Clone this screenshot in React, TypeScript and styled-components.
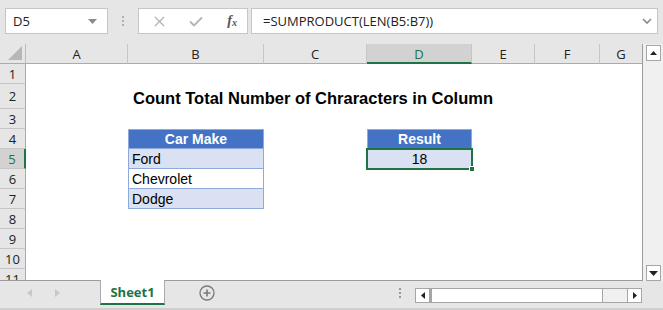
import styled, { createGlobalStyle } from "styled-components";

const GlobalStyle = createGlobalStyle`
  html, body { margin: 0; padding: 0; background: #fff; }
  * { box-sizing: border-box; }
`;

const GREEN = "#217346";
const UI_FONT = `"Open Sans", "Noto Sans", "DejaVu Sans", sans-serif`;
const CELL_FONT = `"Liberation Sans", Arial, sans-serif`;

const COLS = ["A", "B", "C", "D", "E", "F", "G"];
const COL_WIDTHS = [26, 102, 136, 103, 105, 63, 65, 43];
const ROW_HEIGHTS = [20, 20, 25, 20, 20, 20, 20, 20, 20, 20, 20, 20];

type CellKind = "title" | "head" | "band" | "plain" | "result";
type CellData = { text: string; kind: CellKind; align?: "left" | "center" };

// 表のデータ（行番号 → 列番号 → セル）
const cells: Record<number, Record<number, CellData>> = {
  2: { 1: { text: "Count Total Number of Chraracters in Column", kind: "title" } },
  4: {
    1: { text: "Car Make", kind: "head", align: "center" },
    3: { text: "Result", kind: "head", align: "center" },
  },
  5: {
    1: { text: "Ford", kind: "band" },
    3: { text: "18", kind: "result", align: "center" },
  },
  6: { 1: { text: "Chevrolet", kind: "plain" } },
  7: { 1: { text: "Dodge", kind: "band" } },
};

const ArrowDown = ({ color = "#777" }: { color?: string }) => (
  <svg width="9" height="5" viewBox="0 0 9 5">
    <path d="M0 0h9L4.5 5z" fill={color} />
  </svg>
);

export default function App() {
  return (
    <Window>
      <GlobalStyle />
      <FormulaBar>
        <NameBox>
          <span>D5</span>
          <ArrowDown color="#8a8a8a" />
        </NameBox>
        <Grip>
          <i />
          <i />
          <i />
        </Grip>
        <IconBox>
          <svg width="11" height="11" viewBox="0 0 11 11">
            <path d="M1 1l9 9M10 1l-9 9" stroke="#b4b4b4" strokeWidth="1.4" />
          </svg>
          <svg width="14" height="11" viewBox="0 0 14 11">
            <path d="M1 5.5l4 4L13 1.5" stroke="#b4b4b4" strokeWidth="1.8" fill="none" />
          </svg>
          <Fx>
            f<sub>x</sub>
          </Fx>
        </IconBox>
        <FormulaInput>
          <span>=SUMPRODUCT(LEN(B5:B7))</span>
          <svg width="10" height="7" viewBox="0 0 10 7">
            <path d="M1 1l4 4 4-4" stroke="#8a8a8a" strokeWidth="1.6" fill="none" />
          </svg>
        </FormulaInput>
      </FormulaBar>

      <SheetArea>
        <Sheet>
          <Corner>
            <svg width="14" height="14" viewBox="0 0 14 14">
              <path d="M14 0V14H0z" fill="#b7b7b7" />
            </svg>
          </Corner>
          {COLS.map((c) => (
            <ColHeader key={c} $active={c === "D"}>
              {c}
            </ColHeader>
          ))}
          {ROW_HEIGHTS.slice(1).map((_, i) => {
            const row = i + 1;
            return [
              <RowHeader key={`h${row}`} $active={row === 5}>
                {row}
              </RowHeader>,
              ...COLS.map((_, col) => {
                const d = cells[row]?.[col];
                return (
                  <Cell
                    key={`${row}-${col}`}
                    $kind={d?.kind}
                    $align={d?.align ?? "left"}
                    $topEdge={row === 4}
                  >
                    {d?.text}
                    {d?.kind === "result" && <FillHandle />}
                  </Cell>
                );
              }),
            ];
          })}
        </Sheet>
        <VScroll>
          <ScrollBtn>
            <svg width="7" height="4" viewBox="0 0 7 4">
              <path d="M0 4h7L3.5 0z" fill="#222" />
            </svg>
          </ScrollBtn>
          <ScrollBtn>
            <ArrowDown color="#222" />
          </ScrollBtn>
        </VScroll>
      </SheetArea>

      <TabBar>
        <TabNav>
          <svg width="5" height="8" viewBox="0 0 5 8">
            <path d="M5 0v8L0 4z" fill="#c8c8c8" />
          </svg>
          <svg width="5" height="8" viewBox="0 0 5 8">
            <path d="M0 0v8l5-4z" fill="#c8c8c8" />
          </svg>
        </TabNav>
        <SheetTab>Sheet1</SheetTab>
        <AddSheet>
          <svg width="16" height="16" viewBox="0 0 16 16">
            <circle cx="8" cy="8" r="7" stroke="#7a7a7a" strokeWidth="1.3" fill="none" />
            <path d="M8 4.5v7M4.5 8h7" stroke="#7a7a7a" strokeWidth="1.6" />
          </svg>
        </AddSheet>
        <Grip $bar>
          <i />
          <i />
          <i />
        </Grip>
        <HScroll>
          <HBtn>
            <svg width="4" height="7" viewBox="0 0 4 7">
              <path d="M4 0v7L0 3.5z" fill="#222" />
            </svg>
          </HBtn>
          <HThumb />
          <HBtn>
            <svg width="4" height="7" viewBox="0 0 4 7">
              <path d="M0 0v7l4-3.5z" fill="#222" />
            </svg>
          </HBtn>
        </HScroll>
      </TabBar>
    </Window>
  );
}

const Window = styled.div`
  width: 663px;
  height: 310px;
  overflow: hidden;
  background: #e6e6e6;
  display: flex;
  flex-direction: column;
`;

const FormulaBar = styled.div`
  height: 44px;
  display: flex;
  align-items: flex-start;
  padding: 8px 5px 0 5px;
  font-family: ${UI_FONT};
  font-size: 13px;
  color: #222;
`;

const NameBox = styled.div`
  width: 103px;
  height: 26px;
  background: #fff;
  border: 1px solid #c6c6c6;
  display: flex;
  align-items: center;
  justify-content: space-between;
  padding: 0 10px 0 7px;
`;

const Grip = styled.div<{ $bar?: boolean }>`
  width: 30px;
  height: ${(p) => (p.$bar ? "auto" : "26px")};
  display: flex;
  flex-direction: column;
  align-items: center;
  justify-content: center;
  gap: 2px;
  i {
    display: block;
    width: 2px;
    height: 2px;
    background: ${(p) => (p.$bar ? "#9a9a9a" : "#b0b0b0")};
  }
`;

const IconBox = styled.div`
  width: 110px;
  height: 26px;
  background: #fff;
  border: 1px solid #c6c6c6;
  display: flex;
  align-items: center;
  justify-content: space-between;
  padding: 0 10px 0 15px;
`;

const Fx = styled.span`
  font-family: "Liberation Serif", serif;
  font-style: italic;
  font-weight: bold;
  font-size: 14px;
  color: #555;
  sub {
    font-size: 10px;
    vertical-align: -1px;
  }
`;

const FormulaInput = styled.div`
  margin-left: 3px;
  flex: 1;
  height: 26px;
  background: #fff;
  border: 1px solid #c6c6c6;
  display: flex;
  align-items: center;
  justify-content: space-between;
  padding: 0 5px 0 11px;
  font-size: 13px;
`;

const SheetArea = styled.div`
  height: 237px;
  display: flex;
`;

const Sheet = styled.div`
  width: 643px;
  display: grid;
  grid-template-columns: ${COL_WIDTHS.map((w) => `${w}px`).join(" ")};
  grid-template-rows: ${ROW_HEIGHTS.map((h) => `${h}px`).join(" ")};
  background: #fff;
  border-right: 1px solid #9b9b9b;
  border-bottom: 1px solid #9b9b9b;
  overflow: hidden;
`;

const Corner = styled.div`
  background: #e6e6e6;
  border-right: 1px solid #bcbcbc;
  border-bottom: 1px solid #ababab;
  display: flex;
  align-items: flex-end;
  justify-content: flex-end;
  padding: 0 3px 3px 0;
`;

const ColHeader = styled.div<{ $active?: boolean }>`
  background: ${(p) => (p.$active ? "#d2d2d2" : "#e6e6e6")};
  border-right: 1px solid #c6c6c6;
  border-bottom: ${(p) => (p.$active ? `2px solid ${GREEN}` : "1px solid #ababab")};
  color: ${(p) => (p.$active ? GREEN : "#222")};
  font-family: ${UI_FONT};
  font-size: 13px;
  display: flex;
  align-items: center;
  justify-content: center;
  padding-top: ${(p) => (p.$active ? "1px" : "0")};
`;

const RowHeader = styled.div<{ $active?: boolean }>`
  background: ${(p) => (p.$active ? "#d2d2d2" : "#e6e6e6")};
  border-right: ${(p) => (p.$active ? `2px solid ${GREEN}` : "1px solid #ababab")};
  border-bottom: 1px solid #c6c6c6;
  color: ${(p) => (p.$active ? GREEN : "#222")};
  font-family: ${UI_FONT};
  font-size: 13px;
  display: flex;
  align-items: center;
  justify-content: center;
`;

const cellFill: Record<CellKind, string> = {
  title: "transparent",
  head: "#4472c4",
  band: "#d9e1f2",
  plain: "#fff",
  result: "#d9e1f2",
};

const Cell = styled.div<{ $kind?: CellKind; $align: "left" | "center"; $topEdge?: boolean }>`
  position: relative;
  font-family: ${CELL_FONT};
  font-size: ${(p) => (p.$kind === "title" ? "16.5px" : "14px")};
  font-weight: ${(p) => (p.$kind === "title" || p.$kind === "head" ? "bold" : "normal")};
  color: ${(p) => (p.$kind === "head" ? "#fff" : "#000")};
  white-space: nowrap;
  overflow: visible;
  display: flex;
  align-items: flex-end;
  justify-content: ${(p) => (p.$align === "center" ? "center" : "flex-start")};
  padding: 0 3px 1px ${(p) => (p.$kind === "title" ? "5px" : "3px")};
  background: ${(p) => (p.$kind ? cellFill[p.$kind] : "transparent")};
  z-index: ${(p) => (p.$kind === "title" ? 1 : 0)};
  ${(p) =>
    p.$kind && p.$kind !== "title"
      ? `border: 1px solid #8ea9db; border-top-width: ${p.$topEdge ? 1 : 0}px;`
      : ""}
  ${(p) =>
    p.$kind === "result"
      ? `outline: 2px solid ${GREEN}; outline-offset: -1px; z-index: 2;`
      : ""}
`;

const FillHandle = styled.span`
  position: absolute;
  right: -4px;
  bottom: -4px;
  width: 6px;
  height: 6px;
  background: ${GREEN};
  border: 1px solid #fff;
`;

const VScroll = styled.div`
  width: 20px;
  background: #f0f0f0;
  display: flex;
  flex-direction: column;
  justify-content: space-between;
  align-items: center;
  padding: 1px 0 0 0;
`;

const ScrollBtn = styled.div`
  width: 15px;
  height: 16px;
  background: #fff;
  border: 1px solid #a6a6a6;
  display: flex;
  align-items: center;
  justify-content: center;
`;

const TabBar = styled.div`
  flex: 1;
  display: flex;
  align-items: stretch;
  border-bottom: 2px solid #cfcfcf;
  padding-bottom: 3px;
`;

const TabNav = styled.div`
  width: 100px;
  display: flex;
  align-items: center;
  gap: 23px;
  padding-left: 27px;
`;

const SheetTab = styled.div`
  width: 65px;
  background: #fff;
  border-left: 1px solid #ababab;
  border-right: 1px solid #ababab;
  border-bottom: 2px solid ${GREEN};
  margin-top: -1px;
  color: ${GREEN};
  font-family: ${UI_FONT};
  font-weight: bold;
  font-size: 13px;
  display: flex;
  align-items: center;
  justify-content: center;
`;

const AddSheet = styled.div`
  width: 220px;
  display: flex;
  align-items: center;
  padding-left: 34px;
`;

const HScroll = styled.div`
  flex: 1;
  margin: 7px 21px 2px 0;
  display: flex;
  background: #f0f0f0;
  border: 1px solid #a6a6a6;
  border-left: none;
  border-right: none;
`;

const HBtn = styled.div`
  width: 15px;
  background: #fff;
  border: 1px solid #a6a6a6;
  border-top: none;
  border-bottom: none;
  display: flex;
  align-items: center;
  justify-content: center;
`;

const HThumb = styled.div`
  width: 173px;
  margin-right: auto;
  background: #fff;
  border-left: 2px solid #a6a6a6;
  border-right: 1px solid #a6a6a6;
`;
